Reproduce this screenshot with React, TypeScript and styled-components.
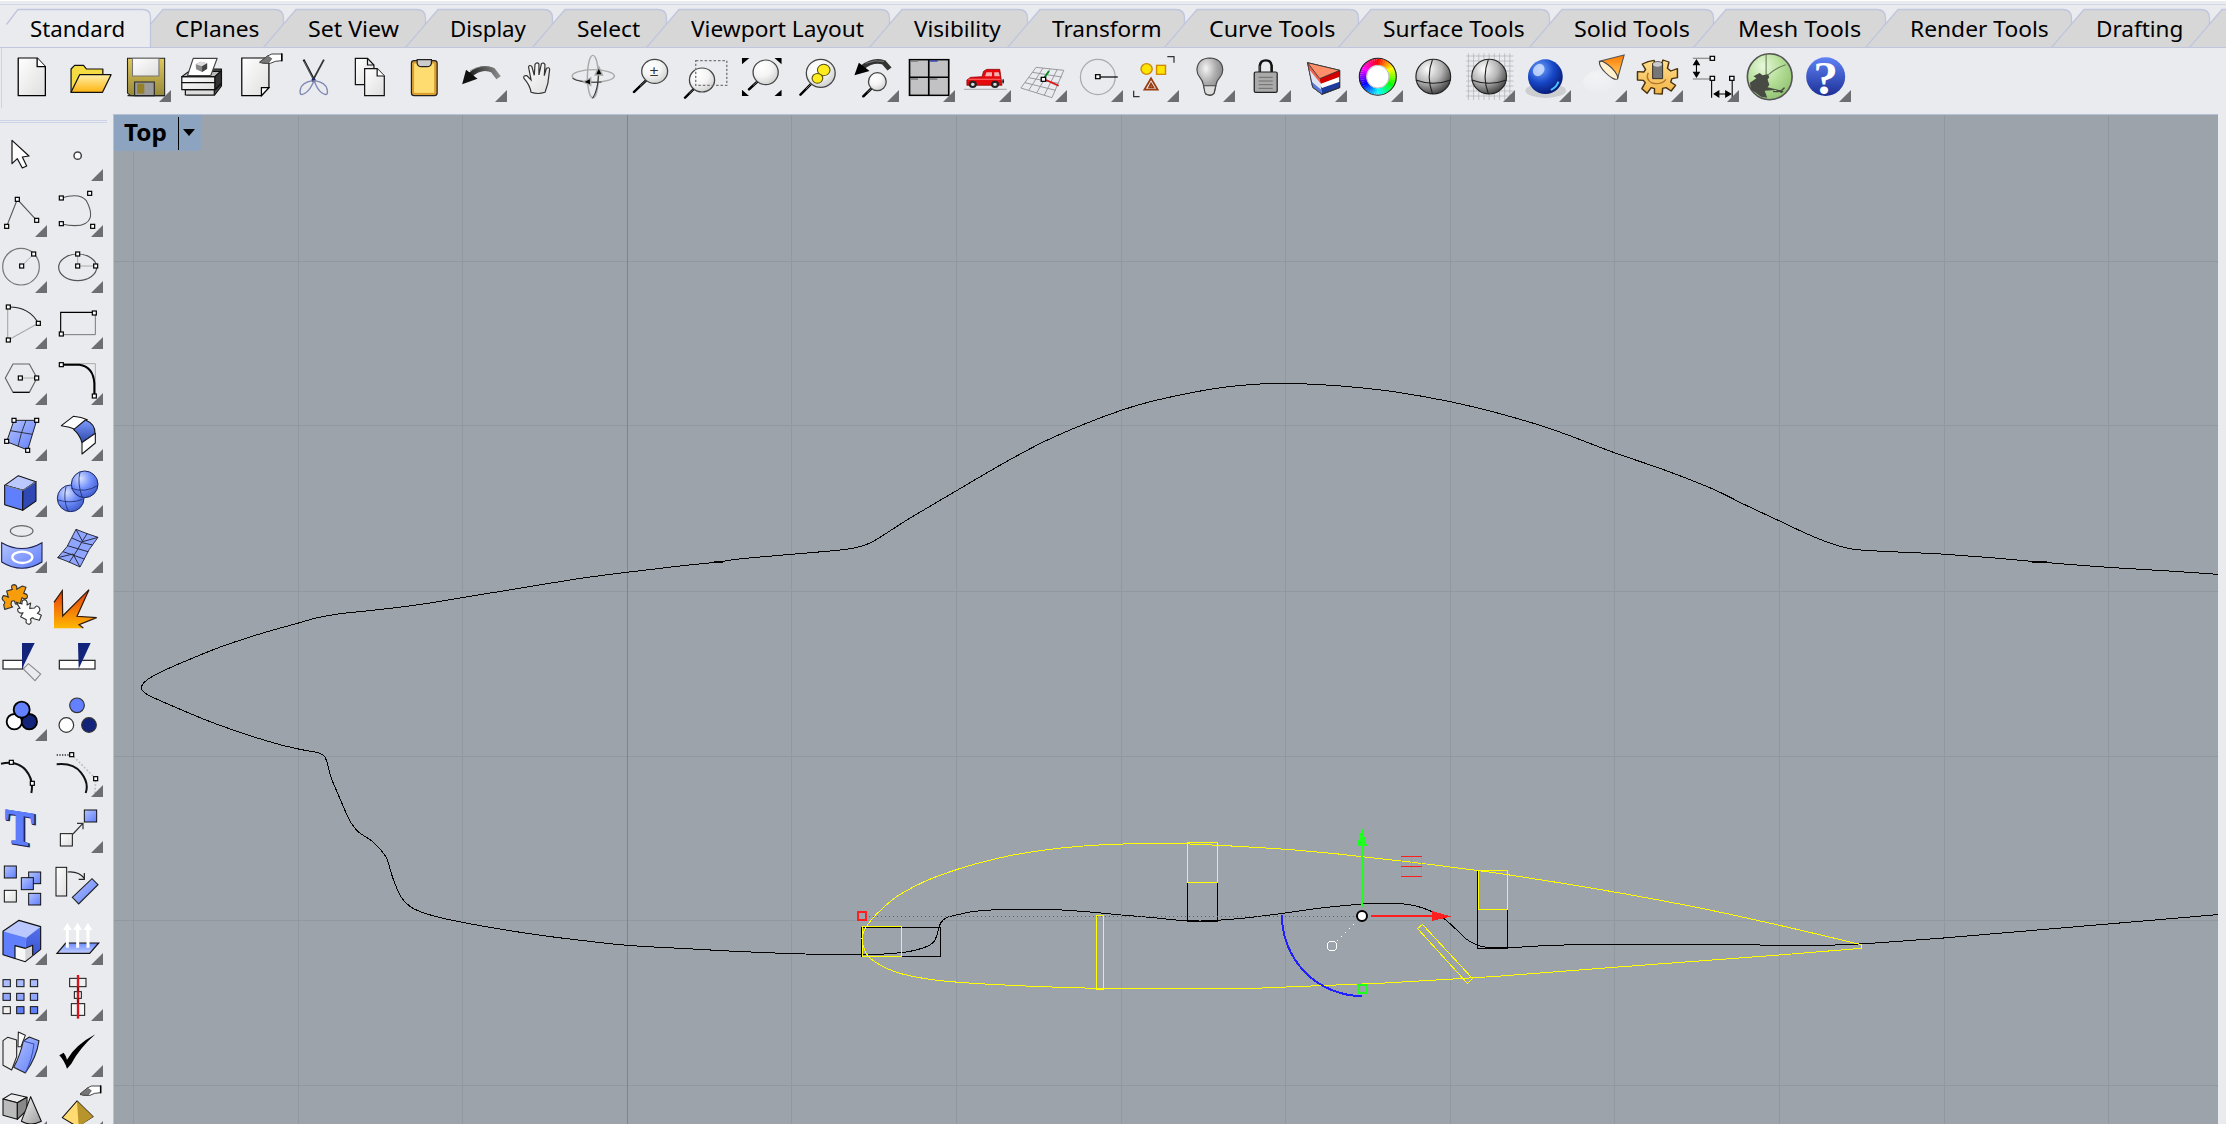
import React from "react";
import styled, { createGlobalStyle } from "styled-components";

const UI_FONT = '"Noto Sans", "Open Sans", sans-serif';

const GlobalStyle = createGlobalStyle`
  html, body { margin: 0; padding: 0; background: #eaebef; overflow: hidden; }
  *, *::before, *::after { box-sizing: border-box; }
`;

const Page = styled.div`
  width: 2226px;
  height: 1124px;
  display: grid;
  grid-template-rows: 8px 40px 66px 1fr;
  background: #eaebef;
  color: #000;
  font-family: ${UI_FONT};
  overflow: hidden;
`;

const TopEdge = styled.div`
  border-top: 1px solid #fff;
  padding-top: 3px;
  &::after { content: ""; display: block; height: 1px; background: #d0d6e6; }
`;

/* ---------- tabs ---------- */

const TabBar = styled.nav`
  display: flex;
  padding-left: 6px;
  border-bottom: 1px solid #bfc6de;
  overflow: hidden;
`;

const TabItem = styled.div<{ $width: number; $active: boolean }>`
  position: relative;
  flex: 0 0 ${(p) => p.$width}px;
  height: 40px;
  padding-left: 24px;
  display: flex;
  align-items: center;
  z-index: ${(p) => (p.$active ? 3 : "auto")};
`;

const TabShape = styled.svg`
  position: absolute;
  top: 0;
  left: -21px;
  height: 40px;
  overflow: visible;
`;

const TabText = styled.span<{ $scale: number }>`
  position: relative;
  z-index: 1;
  white-space: nowrap;
  font-size: 22.5px;
  line-height: 38px;
  padding-top: 2px;
  transform: scaleX(${(p) => p.$scale});
  transform-origin: 0 50%;
`;

const TABS: [string, number, number][] = [
  ["Standard", 145, 0.99],
  ["CPlanes", 133, 1.01],
  ["Set View", 142, 1.03],
  ["Display", 127, 0.99],
  ["Select", 114, 1.01],
  ["Viewport Layout", 223, 1.009],
  ["Visibility", 138, 1.0],
  ["Transform", 157, 1.003],
  ["Curve Tools", 174, 1.035],
  ["Surface Tools", 191, 1.012],
  ["Solid Tools", 164, 1.035],
  ["Mesh Tools", 172, 1.04],
  ["Render Tools", 186, 1.013],
  ["Drafting", 138, 1.0],
  ["", 140, 1],
];

function Tab({ label, width, scale, active }: { label: string; width: number; scale: number; active: boolean }) {
  const r = width + 20.5;
  const d = active
    ? `M21.5 16.5 L33 1.5 H${r - 8} Q${r} 1.5 ${r} 9 V39.5`
    : `M0.5 39.5 L33 1.5 H${r - 9} Q${r} 1.5 ${r} 10 V39.5`;
  const fill = active ? `M21 17 L33 1.5 H${r - 8} Q${r} 1.5 ${r} 9 V40 H21Z` : d + "Z";
  return (
    <TabItem $width={width} $active={active}>
      <TabShape width={width + 22} viewBox={`0 0 ${width + 22} 40`}>
        <path d={fill} fill={active ? "#eaebef" : "#d7d7d7"} />
        <path d={d} fill="none" stroke="#bfc6de" strokeWidth="1.3" />
      </TabShape>
      <TabText $scale={scale}>{label}</TabText>
    </TabItem>
  );
}

/* ---------- tool buttons ---------- */

const Toolbar = styled.div`
  display: flex;
  align-items: flex-start;
  margin-left: 1px;
  padding: 2px 0 0 1px;
  border-left: 1px solid #cdd3e4;
  height: 60px;
`;

const ToolButton = styled.div<{ $h: number; $menu: boolean }>`
  position: relative;
  width: 56px;
  height: ${(p) => p.$h}px;
  flex: none;
  & > svg { display: block; width: 100%; height: 100%; overflow: visible; }
  &::after {
    content: "";
    display: ${(p) => (p.$menu ? "block" : "none")};
    position: absolute;
    right: 0;
    bottom: 0;
    width: 12px;
    height: 12px;
    background: #6d6e71;
    clip-path: polygon(100% 0, 100% 100%, 0 100%);
  }
`;

const Defs = styled.svg`
  position: absolute;
  width: 0;
  height: 0;
`;

const K = "#000";
const line = { fill: "none", stroke: K, strokeWidth: 4, strokeLinejoin: "round" as const };

function Gradients() {
  const lin = (id: string, a: string, b: string, x2 = "0", y2 = "1") => (
    <linearGradient id={id} x1="0" y1="0" x2={x2} y2={y2}>
      <stop offset="0" stopColor={a} />
      <stop offset="1" stopColor={b} />
    </linearGradient>
  );
  const rad = (id: string, a: string, b: string, c: string) => (
    <radialGradient id={id} cx=".35" cy=".28" r=".8">
      <stop offset="0" stopColor={a} />
      <stop offset=".5" stopColor={b} />
      <stop offset="1" stopColor={c} />
    </radialGradient>
  );
  return (
    <Defs>
      <defs>
        {lin("paper", "#fff", "#dedede", "1", "1")}
        {lin("grey", "#f4f4f4", "#9a9a9a", "1", "1")}
        {lin("blue", "#b4c4ff", "#5f7dfa", "1", "1")}
        {lin("blueV", "#6c8cff", "#c2ceff")}
        {lin("blueSide", "#5470ee", "#3c56d0")}
        {lin("sweep", "#7f9bff", "#2c48a8")}
        {lin("help", "#5f82f5", "#1c2f96")}
        {lin("folder", "#fff0a8", "#fdb310")}
        {lin("fire", "#e63a12", "#ffb800", "0", "1")}
        {lin("spot", "#ff7a00", "#ffd36a", "0", "1")}
        {lin("gold", "#e0c85c", "#96893a")}
        {lin("gear", "#ffdf8c", "#f3b548")}
        {lin("fade", "#222", "#888", "1", "0")}
        {rad("ball", "#fff", "#b4b4b4", "#333")}
        {rad("blueball", "#d6e0ff", "#6f8dfb", "#3a56c8")}
        {rad("navyball", "#6fa4ff", "#1747c6", "#04126a")}
        {rad("green", "#e8f8dc", "#b5df98", "#8fc06f")}
        {rad("bulb", "#f4f4f4", "#aaa", "#777")}
        {rad("lens", "#fff", "#f4f4f4", "#ccc")}
        {rad("glow", "#fff", "#f6f6f8", "#eaebef")}
      </defs>
    </Defs>
  );
}

const Tri = ({ p, fill }: { p: string; fill: string }) => <polygon points={p} fill={fill} />;

function Grip({ x, y }: { x: number; y: number }) {
  return <rect x={x - 6} y={y - 6} width="12" height="12" fill="#fff" stroke="#000" strokeWidth="3.6" />;
}

function Box({ x, y, w, h, fill = "url(#blue)" }: { x: number; y: number; w: number; h: number; fill?: string }) {
  return <rect x={x} y={y} width={w} height={h} fill={fill} stroke="#111" strokeWidth="3" />;
}

function Lens({ x, y, rx, ry, tx, ty }: { x: number; y: number; rx: number; ry: number; tx: number; ty: number }) {
  const dx = x - rx * 0.66;
  const dy = y + ry * 0.75;
  return (
    <>
      <path d={`M${tx} ${ty}L${dx} ${dy}`} stroke="#000" strokeWidth="7" strokeLinecap="round" />
      <path d={`M${(tx + dx) / 2} ${(ty + dy) / 2}L${dx} ${dy}`} stroke="#999" strokeWidth="2" />
      <ellipse cx={x} cy={y} rx={rx} ry={ry} fill="url(#lens)" stroke="#444" strokeWidth="3.5" />
    </>
  );
}

function Pointing({ x, y }: { x: number; y: number }) {
  return (
    <g transform={`translate(${x} ${y})`}>
      <path d="M0 26 L22 8 L34 2 H62 V22 L44 24 L30 30 L10 30Z" fill="#fff" stroke="#222" strokeWidth="2.5" />
      <path d="M0 28 L22 8 L34 16 L24 30Z" fill="#777" stroke="#444" strokeWidth="2" />
      <path d="M62 0V24" stroke="#000" strokeWidth="4.5" />
    </g>
  );
}

function Globe({ x, y, rx, ry }: { x: number; y: number; rx: number; ry: number }) {
  return (
    <g stroke="#222" strokeWidth="3" fill="none">
      <ellipse cx={x} cy={y} rx={rx} ry={ry} fill="url(#ball)" />
      <path d={`M${x - 2} ${y - ry}Q${x - 20} ${y} ${x - 2} ${y + ry}M${x - rx} ${y + 10}Q${x} ${y + 30} ${x + rx} ${y + 10}`} />
    </g>
  );
}

const Wheel = () => (
  <g fill="none" strokeWidth="19">
    {Array.from({ length: 48 }, (_, i) => {
      const a = ((i * 7.5 - 94) * Math.PI) / 180;
      const b = ((i * 7.5 - 85.6) * Math.PI) / 180;
      return (
        <path
          key={i}
          d={`M${751 + 41 * Math.cos(a)} ${230 + 45 * Math.sin(a)}L${751 + 41 * Math.cos(b)} ${230 + 45 * Math.sin(b)}`}
          stroke={`hsl(${i * 7.5} 100% 50%)`}
        />
      );
    })}
    <ellipse cx="751" cy="230" rx="50" ry="55.5" stroke="#222" strokeWidth="3" />
    <ellipse cx="751" cy="230" rx="30" ry="34" stroke="#888" strokeWidth="1.5" fill="#fff" />
  </g>
);

/* Each strip of the tool sheet has its own left edge and horizontal scale. */
type Strip = { left: number; sx: number };
const S1: Strip = { left: 0, sx: 2.8 };
const S2: Strip = { left: 540, sx: 2.7034 };
const S3: Strip = { left: 1100, sx: 2.7034 };
const S4: Strip = { left: 1660, sx: 2.7703 };

type TopTool = { name: string; strip: Strip; menu?: boolean; art: React.ReactNode };

const TOP_TOOLS: TopTool[] = [
  { name: "New", strip: S1, art: <g {...line} strokeWidth="3.6"><path d="M51 174H104L127 200V287H51Z" fill="url(#paper)" /><path d="M104 174V200H127" fill="#fff" /></g> },
  {
    name: "Open", strip: S1,
    art: <g stroke="#111" strokeWidth="3.4" strokeLinejoin="round"><path d="M199 277V207L209 196H234L242 207H288V225L276 277Z" fill="#f6dc43" /><path d="M199 277L223 224H311L287 277Z" fill="url(#folder)" /></g>,
  },
  {
    name: "Save", strip: S1, menu: true,
    art: <g stroke="#222" strokeWidth="3"><path d="M357 175H461V287H366L357 279Z" fill="url(#gold)" /><rect x="371" y="175" width="74" height="53" fill="url(#paper)" stroke="#777" /><path d="M377 287V246H432V287Z" fill="#9b9b9b" /><rect x="384" y="251" width="20" height="30" fill="#948027" stroke="none" /><path d="M357 287H461" strokeWidth="4" /></g>,
  },
  {
    name: "Print", strip: S1,
    art: <g stroke="#111" strokeWidth="3.4" strokeLinejoin="round"><path d="M524 227L544 207H620V258L601 285H524Z" fill="#555" /><path d="M509 230H602V269H509Z" fill="url(#paper)" /><path d="M509 230L529 214H618L602 230Z" fill="#bbb" /><path d="M602 230L620 212V250L602 269Z" fill="#333" /><path d="M519 269H600V285H519Z" fill="#ddd" /><path d="M509 248H602M517 269H604L620 250" fill="none" /><path d="M525 227L541 175H608L590 227Z" fill="#fff" stroke="#444" /><path d="M548 193L562 185L580 190V206L566 216L549 208Z" fill="#888" stroke="none" /><path d="M548 193L562 185L580 190L566 199Z" fill="#ddd" stroke="none" /><path d="M566 199L580 190V206L566 216Z" fill="#444" stroke="none" /></g>,
  },
  {
    name: "Properties", strip: S1,
    art: <><path d="M677 174H753V263L732 287H677Z" fill="url(#paper)" {...{ stroke: K, strokeWidth: 3.4 }} /><path d="M753 263H732V287Z" fill="#fff" stroke={K} strokeWidth="3.4" /><Pointing x={727} y={160} /></>,
  },
  {
    name: "Cut", strip: S1,
    art: <g fill="none"><path d="M850 179L882 245" stroke="#111" strokeWidth="6" /><path d="M907 179L874 245" stroke="#333" strokeWidth="5" /><path d="M852 184L876 236" stroke="#bbb" strokeWidth="1.5" /><circle cx="878" cy="238" r="5" fill="#1b2a6b" /><path d="M875 242Q845 248 841 268T850 282T872 258T878 242M881 242Q912 248 916 268T907 282T886 258T880 242" stroke="#8088b4" strokeWidth="4" /></g>,
  },
  {
    name: "Copy", strip: S1,
    art: <g stroke="#111" strokeWidth="3.4"><path d="M995 175H1029L1047 195V254H995Z" fill="url(#paper)" /><path d="M1029 175V195H1047" fill="none" /><path d="M1021 206H1056L1076 228V287H1021Z" fill="url(#paper)" /><path d="M1056 206V228H1076" fill="#fff" /></g>,
  },
  {
    name: "Paste", strip: S1,
    art: <g stroke="#222" strokeWidth="3.4"><rect x="1152" y="182" width="72" height="105" rx="8" fill="#e0a030" /><rect x="1158" y="189" width="59" height="91" rx="3" fill="#ffdc70" stroke="#c79328" strokeWidth="2" /><path d="M1168 179H1208V190Q1206 200 1196 200H1180Q1170 200 1168 190Z" fill="#ccc" /></g>,
  },
  {
    name: "Undo", strip: S1, menu: true,
    art: <g><path d="M1315 226Q1348 195 1380 211L1396 233" fill="none" stroke="url(#fade)" strokeWidth="15" /><path d="M1316 212Q1350 192 1382 205" fill="none" stroke="#777" strokeWidth="2" /><Tri p="1294,253 1305,209 1337,236" fill="#111" /></g>,
  },
  {
    name: "Pan", strip: S1,
    art: <path d="M1487 277Q1484 255 1467 235Q1464 226 1475 227L1487 240L1480 201Q1482 193 1489 199L1496 226L1498 193Q1504 185 1509 192V225L1516 191Q1523 186 1526 194L1524 227L1530 205Q1538 200 1539 208L1534 250L1526 277Q1506 284 1487 277Z" fill="url(#paper)" stroke="#333" strokeWidth="3.4" />,
  },
  {
    name: "Rotate view", strip: S2,
    art: <g fill="none" stroke="#aaa" strokeWidth="4"><ellipse cx="143" cy="230" rx="15" ry="64" /><ellipse cx="144" cy="228" rx="57" ry="19" /><path d="M88 235Q108 249 166 246M158 224Q157 270 142 295" stroke="#333" strokeWidth="3" /><Tri p="117,246 137,234 137,256" fill="#000" /><Tri p="159,201 149,225 169,225" fill="#000" /></g>,
  },
  { name: "Zoom", strip: S2, art: <><Lens x={310} y={214} rx={35} ry={36} tx={254} ty={276} /><text x="297" y="227" fontFamily="Liberation Sans" fontSize="42" fill="#333">±</text></> },
  {
    name: "Zoom window", strip: S2,
    art: <><Lens x={438} y={240} rx={34} ry={36} tx={392} ty={293} /><rect x="421" y="182" width="84" height="74" fill="none" stroke="#777" strokeWidth="3.6" strokeDasharray="7 5" /></>,
  },
  {
    name: "Zoom extents", strip: S2,
    art: <><Lens x={610} y={217} rx={34} ry={37} tx={565} ty={268} /><path d="M546 174H566L546 193ZM653 174V193L634 174ZM546 288V269L565 288ZM653 288H634L653 269Z" fill="#000" /></>,
  },
  {
    name: "Zoom selected", strip: S2,
    art: <><Lens x={759} y={220} rx={39} ry={42} tx={704} ty={284} /><g fill="#ffeb1e" stroke="#54500e" strokeWidth="3"><circle cx="767" cy="210" r="17" /><circle cx="750" cy="235" r="14.5" /></g></>,
  },
  {
    name: "Undo view", strip: S2, menu: true,
    art: <><Lens x={912} y={245} rx={24} ry={27} tx={874} ty={289} /><path d="M872 202Q900 177 929 187L945 207" fill="none" stroke="#333" strokeWidth="14" /><path d="M880 190Q906 178 930 184" fill="none" stroke="#999" strokeWidth="2" /><Tri p="850,226 862,188 891,213" fill="#000" /></>,
  },
  {
    name: "Four viewports", strip: S2, menu: true,
    art: <g><rect x="999" y="179" width="106" height="107" fill="#c2c2c4" stroke="#000" strokeWidth="4.5" /><path d="M1051 179V286M999 232H1105" stroke="#000" strokeWidth="4.5" /><path d="M1002 183H1022M1002 237H1022M1054 237H1074" stroke="#777" strokeWidth="4" /><path d="M1054 183H1075" stroke="#2338b0" strokeWidth="4" /></g>,
  },
  {
    name: "Shade car", strip: S2, menu: true,
    art: <g><path d="M1146 268H1262" stroke="#b4b4b6" strokeWidth="4" /><path d="M1154 256V240L1164 232L1195 230L1199 214L1208 208H1243L1249 256Z" fill="#e5080c" stroke="#8b0000" strokeWidth="2" /><path d="M1203 229L1207 217H1222V229ZM1228 217H1240L1243 229H1228Z" fill="#f5b0b0" /><path d="M1158 238H1245" stroke="#ff7272" strokeWidth="3" /><g fill="#ddd" stroke="#222" strokeWidth="6"><circle cx="1170" cy="253" r="8" /><circle cx="1230" cy="253" r="8" /></g><ellipse cx="1252" cy="244" rx="2.5" ry="7" fill="#222" /></g>,
  },
  {
    name: "CPlane", strip: S2, menu: true,
    art: <g fill="none" stroke="#909096" strokeWidth="2.6"><path d="M1341 202L1416 211L1384 293L1300 264ZM1331 217L1410 231M1321 233L1402 250M1311 248L1394 271M1360 204L1321 271M1379 207L1343 278M1398 209L1363 286" /><path d="M1361 237L1376 213" stroke="#0a8a1e" strokeWidth="5" /><path d="M1368 240L1402 257" stroke="#d11" strokeWidth="5" /><Grip x={1361} y={238} /></g>,
  },
  {
    name: "Circle", strip: S2, menu: true,
    art: <g fill="none"><ellipse cx="1508" cy="231" rx="47" ry="53" stroke="#aaa" strokeWidth="3.4" /><path d="M1508 231H1562" stroke="#000" strokeWidth="3.6" /><Grip x={1508} y={230} /></g>,
  },
  {
    name: "Select", strip: S3, menu: true,
    art: <g fill="#ffe400" stroke="#cf8a0a" strokeWidth="4"><ellipse cx="126" cy="207" rx="15" ry="16" /><rect x="153" y="196" width="24" height="27" /><path d="M138 235L156 269H120ZM138 251L133 262H144Z" fill="none" stroke="#9a3e12" strokeWidth="5" /><path d="M182 170H200V188M91 272V290H107" fill="none" stroke="#333" strokeWidth="3.4" /></g>,
  },
  {
    name: "Lamp", strip: S3, menu: true,
    art: <g stroke="#444" strokeWidth="3"><path d="M279 253Q278 243 270 232Q262 221 262 209Q264 175 297 174Q330 176 332 209Q332 221 324 232Q315 243 314 253L309 279Q302 291 286 283Z" fill="url(#bulb)" /><path d="M280 257H313L308 280Q297 291 284 279Z" fill="#ddd" /></g>,
  },
  {
    name: "Lock", strip: S3, menu: true,
    art: <g><path d="M432 217V197Q434 181 448 181Q463 181 464 197V217" fill="none" stroke="#111" strokeWidth="7" /><path d="M432 215V197" stroke="#aaa" strokeWidth="1.5" /><rect x="417" y="216" width="62" height="61" rx="4" fill="#aaa" stroke="#222" strokeWidth="3.4" /><path d="M429 232H467M429 243H467M429 254H467M429 265H467" stroke="#666" strokeWidth="2.5" /></g>,
  },
  {
    name: "Layers", strip: S3, menu: true,
    art: <g strokeWidth="2.4" stroke="#333"><path d="M561 188L648 211V263L600 283L575 262Z" fill="#1e3c9c" stroke="#111" /><path d="M564 205L600 264L648 245V225L594 236Z" fill="#fff" stroke="none" /><path d="M562 194L597 251L648 230V211L594 236Z" fill="#d30000" stroke="none" /><path d="M561 188L594 236L600 283L575 262Z" fill="#dfe4f4" stroke="none" /><path d="M561 188L594 236L596 250L565 208Z" fill="#f2604c" stroke="none" /><path d="M569 242L599 270L600 283L575 262Z" fill="#5878d8" stroke="none" /><path d="M561 188L648 211L594 236Z" fill="#ff8f69" /><path d="M561 188L575 262L600 283L648 263V211" fill="none" /></g>,
  },
  { name: "Colours", strip: S3, menu: true, art: <Wheel /> },
  { name: "Shaded", strip: S3, art: <Globe x={901} y={230} rx={47} ry={52} /> },
  {
    name: "Shaded grid", strip: S3, menu: true,
    art: <><path d="M996 160V300M1010 160V300M1024 160V300M1038 160V300M1052 160V300M1066 160V300M1080 160V300M1094 160V300M1108 160V300M990 168H1118M990 183H1118M990 198H1118M990 213H1118M990 228H1118M990 243H1118M990 258H1118M990 273H1118M990 288H1118" stroke="#aeb0b4" strokeWidth="2" /><Globe x={1052} y={230} rx={47} ry={52} /></>,
  },
  {
    name: "Rendered", strip: S3, menu: true,
    art: <><ellipse cx="1205" cy="272" rx="55" ry="22" fill="#999" opacity=".35" /><ellipse cx="1204" cy="230" rx="47" ry="52" fill="url(#navyball)" /><ellipse cx="1186" cy="210" rx="15" ry="19" fill="#dbe8ff" opacity=".75" transform="rotate(25 1186 210)" /><path d="M1219 270Q1236 260 1239 245" stroke="#4cc3ff" strokeWidth="6" fill="none" /></>,
  },
  {
    name: "Spotlight", strip: S3, menu: true,
    art: <><ellipse cx="1352" cy="245" rx="46" ry="34" fill="url(#glow)" opacity=".4" /><path d="M1350 184L1417 165L1399 236Z" fill="url(#spot)" stroke="#555" strokeWidth="3" /><ellipse cx="1375" cy="211" rx="11" ry="35" fill="#fff0cf" stroke="#444" strokeWidth="3" transform="rotate(-42 1375 211)" /></>,
  },
  {
    name: "Options", strip: S3, menu: true,
    art: <g><path d="M1482 185L1498 181L1502 198H1516L1522 180L1538 186L1534 205L1543 213L1561 206V233L1546 236L1543 246L1556 256L1544 273L1530 263L1521 265L1520 282L1499 281V266L1490 263L1479 280L1465 266L1474 248L1469 241L1453 240V215L1470 216L1475 209L1466 192Z" fill="url(#gear)" stroke="#4a3210" strokeWidth="4" strokeLinejoin="round" /><path d="M1482 218Q1474 238 1492 249Q1518 256 1530 238" fill="none" stroke="#b8782c" strokeWidth="4" /><path d="M1494 190Q1508 180 1521 190V236H1494Z" fill="#777" stroke="#222" strokeWidth="2.5" /><ellipse cx="1507" cy="193" rx="12" ry="7" fill="#ccc" /></g>,
  },
  {
    name: "Dimension", strip: S4, menu: true,
    art: <g stroke="#000" strokeWidth="3" fill="none"><path d="M91 175H140M91 237H140" stroke="#777" /><path d="M101 188V222M143 241V293M200 241V293M156 282H190" /><Tri p="101,180 93,194 109,194" fill="#000" /><Tri p="101,231 93,217 109,217" fill="#000" /><Tri p="150,282 163,273 163,291" fill="#000" /><Tri p="196,282 182,273 182,291" fill="#000" /><Grip x={145} y={175} /><Grip x={145} y={235} /><Grip x={199} y={235} /></g>,
  },
  {
    name: "Grasshopper", strip: S4,
    art: <g><ellipse cx="304" cy="230" rx="62" ry="69" fill="url(#green)" stroke="#555" strokeWidth="4.5" /><path d="M294 163V225M298 226Q322 203 348 194" stroke="#667a58" strokeWidth="3" fill="none" /><path d="M249 248L267 235L259 229L276 219L284 226L298 223L303 231L298 239L303 254L298 262L343 273L337 280L320 270L290 272L297 293L280 290L252 268Z" fill="#484a44" /><path d="M345 263Q335 278 313 274" stroke="#484a44" strokeWidth="4" fill="none" /></g>,
  },
  {
    name: "Help", strip: S4, menu: true,
    art: <g><ellipse cx="459" cy="230" rx="54" ry="58" fill="url(#help)" /><text x="459" y="281" textAnchor="middle" fontFamily="Liberation Serif" fontWeight="700" fontSize="137" fill="#fff">?</text></g>,
  },
];

/* ---------- side tools, drawn on a sheet three times the button size ---------- */

type SideTool = { name: string; menu?: boolean; art: React.ReactNode };
const SIDE_ROWS: { y: number; tools: SideTool[] }[] = [
  { y: 45, tools: [
    { name: "Pointer", art: <path d="M36 91V161L52 146L67 174L80 168L67 141L87 138Z" fill="#fff" stroke="#111" strokeWidth="3.6" strokeLinejoin="round" /> },
    { name: "Point", menu: true, art: <circle cx="233" cy="137" r="11" fill="#fff" stroke="#444" strokeWidth="4.5" /> },
  ] },
  { y: 213, tools: [
    { name: "Polyline", menu: true, art: <><path d="M20 349L52 268L110 331" fill="none" stroke="#555" strokeWidth="3.4" /><Grip x={20} y={349} /><Grip x={52} y={268} /><Grip x={110} y={331} /></> },
    { name: "Curve", menu: true, art: <><path d="M184 264Q240 247 259 272Q275 300 271 322Q260 358 184 342" fill="none" stroke="#555" strokeWidth="3.2" /><Grip x={184} y={264} /><Grip x={269} y={250} /><Grip x={184} y={341} /><Grip x={278} y={349} /></> },
  ] },
  { y: 381, tools: [
    { name: "Circle", menu: true, art: <><circle cx="63" cy="470" r="55" fill="none" stroke="#777" strokeWidth="3.6" /><path d="M65 468L101 432" stroke="#aaa" strokeWidth="3" /><Grip x={65} y={468} /><Grip x={101} y={432} /></> },
    { name: "Ellipse", menu: true, art: <><ellipse cx="233" cy="472" rx="57" ry="40" fill="none" stroke="#555" strokeWidth="3.6" /><path d="M233 432V468H287" fill="none" stroke="#aaa" strokeWidth="3" /><Grip x={233} y={432} /><Grip x={233} y={468} /><Grip x={287} y={468} /></> },
  ] },
  { y: 549, tools: [
    { name: "Arc", menu: true, art: <><path d="M115 640L25 690M23 690V591" stroke="#aaa" strokeWidth="3.4" fill="none" /><path d="M25 591Q88 590 115 640" stroke="#222" strokeWidth="3.4" fill="none" /><Grip x={25} y={591} /><Grip x={115} y={640} /><Grip x={25} y={690} /></> },
    { name: "Rectangle", menu: true, art: <><path d="M286 607V674H182" fill="none" stroke="#777" strokeWidth="3" /><path d="M182 674V607H286" fill="none" stroke="#000" strokeWidth="3.4" /><Grip x={283} y={609} /><Grip x={184} y={672} /></> },
  ] },
  { y: 717, tools: [
    { name: "Polygon", menu: true, art: <><path d="M39 762H88L111 804L88 847H39L16 804Z" fill="none" stroke="#666" strokeWidth="3.4" /><path d="M39 847H88" stroke="#000" strokeWidth="3.4" /><path d="M61 804H110" stroke="#aaa" strokeWidth="3" /><Grip x={61} y={804} /><Grip x={110} y={804} /></> },
    { name: "Fillet", menu: true, art: <><path d="M184 761H286V858" fill="none" stroke="#aaa" strokeWidth="3" /><path d="M184 764H238Q280 770 283 820V858" fill="none" stroke="#000" strokeWidth="6" /><Grip x={184} y={764} /><Grip x={283} y={858} /></> },
  ] },
  { y: 885, tools: [
    { name: "Surface", menu: true, art: <g stroke="#222" strokeWidth="3"><path d="M42 931H110L83 1020L20 995Z" fill="url(#blue)" /><path d="M78 931Q62 970 54 1009M31 962L97 973" fill="none" strokeWidth="2.6" /><Grip x={42} y={931} /><Grip x={110} y={931} /><Grip x={20} y={994} /><Grip x={83} y={1021} /></g> },
    { name: "Sweep", menu: true, art: <g stroke="#111" strokeWidth="3.2" strokeLinejoin="round"><path d="M184 947L220 919Q245 922 262 929L228 960Q210 950 184 947Z" fill="#fff" /><path d="M256 930Q286 942 285 970L246 998Q238 972 221 959Z" fill="url(#sweep)" /><path d="M246 998L286 970V999L246 1032Z" fill="#fff" /></g> },
  ] },
  { y: 33, tools: [
    { name: "Box", menu: true, art: <g stroke="#111" strokeWidth="3.2" strokeLinejoin="round"><path d="M14 106L55 77L108 95L69 121Z" fill="#bac8ff" /><path d="M14 106L69 121L68 181L14 164Z" fill="#5f7ffc" /><path d="M69 121L108 95V153L68 181Z" fill="#3048b4" /><path d="M15 107L69 121L107 96" fill="none" stroke="#dfe6ff" strokeWidth="1.6" /></g> },
    { name: "Boolean", menu: true, art: <g fill="url(#blueball)" stroke="#1c2860" strokeWidth="3"><circle cx="212" cy="145" r="40" /><path d="M198 110Q188 150 205 184M174 150Q212 162 247 148" fill="none" strokeWidth="2.4" /><circle cx="254" cy="103" r="40" /><path d="M240 66Q231 100 247 142M214 115Q254 130 293 107" fill="none" strokeWidth="2.4" /></g> },
  ] },
  { y: 201, tools: [
    { name: "Project", menu: true, art: <g><ellipse cx="65" cy="243" rx="34" ry="16" fill="none" stroke="#666" strokeWidth="3.4" /><path d="M5 278Q66 313 126 278V336Q66 374 5 336Z" fill="url(#blue)" stroke="#1a2150" strokeWidth="3.2" /><ellipse cx="67" cy="322" rx="30" ry="17" fill="none" stroke="#fff" strokeWidth="7" /></g> },
    { name: "Mesh", menu: true, art: <g fill="none" stroke="#223" strokeWidth="2.8"><path d="M228 238Q262 252 294 262L268 298L240 351Q205 334 173 323L201 290Z" fill="#8ea6ff" /><path d="M216 264Q248 282 278 285M189 305L253 327M262 250Q245 275 232 300L207 338M202 287L264 305M228 238L248 275L294 262M173 323L219 312L240 351" /></g> },
  ] },
  { y: 369, tools: [
    { name: "Plug-ins", art: <g stroke="#333" strokeWidth="3.4" strokeLinejoin="round"><path d="M20 423L37 418Q30 405 43 404Q53 407 50 418L67 408L78 412L71 430Q86 432 81 444Q74 450 66 443L60 464L46 462Q45 448 35 454Q30 466 38 471L14 478L11 464Q18 458 10 452Q3 446 10 437Q20 438 25 442Z" fill="#f79d0c" /><path d="M49 457L66 462Q64 450 75 449Q84 454 81 465L92 459L89 475L104 474Q109 463 117 472Q124 481 112 490L124 496L118 511L102 506Q98 500 91 508Q97 519 88 523Q75 522 79 509L62 500L69 488Q60 492 54 484Q50 474 60 475Z" fill="#fff" /></g> },
    { name: "Explode", art: <><path d="M162 457L187 422L188 498L267 419L231 499L290 503L237 524L250 535H162Z" fill="url(#fire)" /><path d="M162 457L187 422L188 498L267 419L231 499L290 503L237 524L250 534" fill="none" stroke="#321a08" strokeWidth="3.6" /></> },
  ] },
  { y: 537, tools: [
    { name: "Trim", art: <g><rect x="9" y="631" width="59" height="26" fill="#fff" stroke="#222" strokeWidth="3.6" /><path d="M85 641L122 672L105 692L70 657Z" fill="none" stroke="#888" strokeWidth="3.2" /><Tri p="66,579 104,579 66,656" fill="#12247a" /></g> },
    { name: "Split", art: <g><rect x="178" y="631" width="107" height="26" fill="#fff" stroke="#222" strokeWidth="3.6" /><Tri p="234,579 272,579 236,656" fill="#12247a" /></g> },
  ] },
  { y: 705, tools: [
    { name: "Group", menu: true, art: <g stroke="#000" strokeWidth="5.5"><circle cx="43" cy="815" r="23" fill="#fff" /><circle cx="88" cy="815" r="23" fill="#12247a" /><circle cx="65" cy="779" r="24" fill="#6280ff" /></g> },
    { name: "Ungroup", art: <g stroke="#333" strokeWidth="3.6"><circle cx="231" cy="766" r="22" fill="#6280ff" /><circle cx="199" cy="825" r="22" fill="#fff" /><circle cx="267" cy="825" r="22" fill="#12247a" /></g> },
  ] },
  { y: 873, tools: [
    { name: "Edit points", art: <><path d="M3 941Q50 930 77 960Q102 990 94 1029" fill="none" stroke="#111" strokeWidth="6" /><Grip x={34} y={937} /><Grip x={97} y={1000} /></> },
    { name: "Control points", menu: true, art: <><path d="M170 943Q220 938 243 968Q268 1000 257 1029" fill="none" stroke="#111" strokeWidth="6" /><path d="M170 915H207" stroke="#333" strokeWidth="4" strokeDasharray="4 4" /><path d="M221 920L287 986L285 1029" fill="none" stroke="#bbb" strokeWidth="5" strokeDasharray="5 6" /><Grip x={215} y={914} /><Grip x={287} y={986} /></> },
  ] },
  { y: 51, tools: [
    { name: "Text", art: <g transform="translate(58 192) skewY(9) scale(.9 1)" fontFamily="Liberation Serif" fontWeight="700" fontSize="146"><text x="-44" y="2" stroke="#1c2554" strokeWidth="7" fill="#1c2554">T</text><text x="-48" y="0" stroke="#5d7dfb" strokeWidth="4" fill="#5d7dfb">T</text></g> },
    { name: "Move", menu: true, art: <><Box x={181} y={161} w={36} h={37} fill="url(#paper)" /><Box x={253} y={90} w={37} h={36} /><path d="M219 162L248 131M231 130H249V148" fill="none" stroke="#333" strokeWidth="3.6" /></> },
  ] },
  { y: 219, tools: [
    { name: "Copy", art: <><Box x={13} y={258} w={36} h={36} /><Box x={86} y={276} w={36} h={35} /><Box x={64} y={293} w={36} h={36} /><Box x={13} y={331} w={36} h={35} fill="url(#paper)" /><Box x={86} y={340} w={36} h={35} /></> },
    { name: "Rotate", art: <><Box x={168} y={262} w={32} h={86} fill="url(#paper)" /><path d="M217 352L276 296L294 314L236 372Z" fill="url(#blue)" stroke="#222" strokeWidth="3.4" /><path d="M203 276Q236 273 253 295M253 279V298H236" fill="none" stroke="#222" strokeWidth="3.6" /></> },
  ] },
  { y: 387, tools: [
    { name: "Solid edit", menu: true, art: <g stroke="none"><path d="M9 454L57 421L122 440L79 473Z" fill="#bac8ff" /><path d="M9 454L79 473L76 505L45 497V537L9 524Z" fill="#5f7ffc" /><path d="M79 473L122 440V508L99 526V496L76 505Z" fill="url(#blueSide)" /><path d="M45 497L76 505L98 496V526L76 545L45 537Z" fill="#f7f7f7" /><path d="M76 505L98 496V526L76 545Z" fill="#d4d4d6" /><g fill="none" stroke="#111" strokeWidth="3.4" strokeLinejoin="round"><path d="M9 454L57 421L122 440V508L76 545L9 524Z" /><path d="M45 537V497L76 505L98 496V526" /></g></g> },
    { name: "Extrude", menu: true, art: <g><path d="M197 489H296L269 520H171Z" fill="url(#blueV)" stroke="#111" strokeWidth="3.6" /><path d="M202 503V446M233 503V446M264 503V446" stroke="#fff" strokeWidth="9" /><path d="M189 450L202 428L215 450ZM220 450L233 428L246 450ZM251 450L264 428L277 450Z" fill="#fff" /></g> },
  ] },
  { y: 555, tools: [
    { name: "Array", menu: true, art: <>{[599, 640, 680].map((y, r) => [9, 50, 91].map((x, c) => <Box key={x + y} x={x} y={y} w={22} h={21} fill={r === 2 && c === 0 ? "#f1f0ec" : ["#aabcff", "#90a8ff", "#5f7ffa"][r]} />))}</> },
    { name: "Align", menu: true, art: <><Box x={209} y={595} w={49} h={25} fill="#f0f0f0" /><Box x={223} y={635} w={21} h={20} fill="#f0f0f0" /><Box x={214} y={671} w={40} h={35} fill="#f4f4f4" /><path d="M234 585V716" stroke="#d9141c" strokeWidth="7" /><path d="M234 620V635M234 656V670" stroke="#650000" strokeWidth="3" /></> },
  ] },
  { y: 723, tools: [
    { name: "Blocks", menu: true, art: <g stroke="#222" strokeWidth="3.2" strokeLinejoin="round"><path d="M9 782L23 772L50 780V830L35 870L9 856Z" fill="#ededee" /><path d="M54 800L55 756L76 766L63 800Z" fill="#fff" /><path d="M41 862Q60 828 70 783L88 771L117 782Q110 832 76 879Z" fill="url(#blue)" /><path d="M70 783L102 792Q96 840 76 879" fill="none" stroke="#3550b8" /></g> },
    { name: "Check", menu: true, art: <path d="M178 826L191 818Q198 827 201 839Q226 795 286 763Q241 802 214 851L201 866Q193 842 178 826Z" fill="#000" /> },
  ] },
  { y: 891, tools: [
    { name: "Solids", menu: true, art: <g stroke="#111" strokeWidth="3.2" strokeLinejoin="round"><path d="M9 957L35 941L81 952L52 968Z" fill="#eee" /><path d="M9 957L52 968V1018L9 1006Z" fill="#bbb" /><path d="M52 968L81 952V990L52 1018Z" fill="#888" /><path d="M92 950L124 1024Q92 1040 64 1024Z" fill="url(#grey)" /></g> },
    { name: "Render tools", menu: true, art: <><path d="M231 963L279 1010L232 1040L187 1013Z" fill="#ffdb71" stroke="#111" strokeWidth="3.2" /><path d="M231 963L279 1010L236 1040Z" fill="#b8942c" /><Pointing x={240} y={916} /></> },
  ] },
];

/* ---------- viewport ---------- */

const Body = styled.div`
  display: grid;
  grid-template-columns: 113px 2105px 8px;
  min-height: 0;
`;

const Sidebar = styled.aside`
  height: 1010px;
  padding-top: 6px;
  overflow: hidden;
`;

const SideGrip = styled.div`
  width: 107px;
  height: 3px;
  margin-bottom: 2px;
  border-top: 1px solid #cdd3e8;
  border-bottom: 1px solid #cdd3e8;
`;

const SideGrid = styled.div`
  display: grid;
  grid-template-columns: 56px 56px;
  margin-left: -9px;
`;

const Viewport = styled.main`
  position: relative;
  height: 1010px;
  border-left: 1px solid #b6c1d6;
  border-top: 1px solid #b3c0d6;
  background: #9ca3ab;
  overflow: hidden;
  & > svg { display: block; }
`;

const ViewLabel = styled.div`
  position: absolute;
  top: 0;
  left: 0;
  width: 87px;
  height: 36px;
  display: flex;
  align-items: center;
  padding-left: 10px;
  background: #8ca4c0;
  border-bottom-right-radius: 4px;
  font-size: 23px;
  font-weight: 700;
`;

const ViewName = styled.span`
  width: 54px;
  line-height: 34px;
  padding-bottom: 2px;
  transform: scaleX(1.06);
  transform-origin: 0 50%;
`;

const ViewMenu = styled.span`
  height: 33px;
  border-left: 1px solid #000;
  padding: 12px 0 0 4px;
  &::after {
    content: "";
    display: block;
    border: 6.5px solid transparent;
    border-top: 7px solid #000;
    border-bottom: 0;
  }
`;

const NOSE: number[][] = [
  [2219,574.4],[2169,571],[2108,567.3],[2039.4,562],[1994.8,558],[1945.6,554.3],[1927.8,553.3],[1883,551.3],[1851.9,549],[1829.6,543],[1807.3,534],[1779.6,521],[1744.8,504.7],[1713.5,489.3],[1664.4,470],[1614.4,452.7],[1570.6,436],[1540,425.3],[1496.3,412.7],[1450.3,401.7],[1398,392.3],[1349,386.7],[1313,384.3],[1285,383.3],[1255.2,384.3],[1224,387.3],[1188.2,393.3],[1148,402.3],[1121.3,410.3],[1083.3,424.5],[1045.4,441],[1005.2,462.3],[956.5,490.7],[907,520],[878,538.5],[868.4,543.7],[855.6,547.7],[840,550],[791.6,554.3],[738.8,559],[718.5,562],[679.8,566],[627,572.3],[583,578],[545.3,584],[517,588.7],[488.7,593.3],[462.2,597.7],[432,602.7],[403.7,606.7],[366,611],[337.7,614],[316.4,618],[298.5,623],[262,633.3],[226.7,644.7],[200.8,654.7],[172.5,666.7],[153.6,675.7],[145,681.7],[141.3,687.3],[144.2,692.3],[152.7,697.3],[177.2,708],[210.2,721.7],[248,735],[278.7,744.3],[299.9,749.3],[318.8,753],[324.4,756.3],[327.3,763.3],[331,777.3],[340,798.7],[347,815],[351.8,824],[359.4,832.7],[371.6,840.7],[380,849],[386.7,858.3],[390.5,870.7],[394.3,882],[400.9,896.7],[409.4,906],[420.2,911.7],[439,917.3],[462.2,922.3],[498,928.7],[540.6,935.3],[578.3,940],[627,945.3],[686.9,948.7],[743.5,951.7],[804.9,954],[860,954.5],[881,954.2],[904,952.3],[918.6,949.3],[929.3,945.3],[934.3,941],[937,935],[939.3,926],[942.9,920.3],[948.2,917],[956.4,915],[972,911.7],[997,909.7],[1025.7,909.2],[1056,909.7],[1090,912],[1121.4,915],[1154.3,917.7],[1175.7,920],[1200.7,921],[1225.7,919.7],[1254.3,917],[1285.4,913],[1318.6,908.3],[1361.8,904],[1380,903.3],[1401.4,903.7],[1415.7,906],[1426.4,909.3],[1432.5,912],[1443.2,918],[1456.8,930],[1465.7,938.7],[1476.4,944.7],[1487,947.3],[1515.7,947.3],[1544.3,945.7],[1580,944.7],[1737,944.5],[1772.9,945.3],[1822.9,945.3],[1844.3,944.7],[1880,942.7],[1915.7,940],[1940,938.3],[2219,914.5],
];

const FOIL: number[][] = [
  [1861.5,944.7],[1779.3,925.3],[1701.4,908.3],[1614.3,892],[1507.5,874.7],[1450.4,867],[1401.4,861],[1361.8,856.7],[1336.4,853.8],[1285.4,849.3],[1225.7,845.7],[1186.4,843.9],[1150.7,843.5],[1104.3,844.7],[1061.4,848],[1018.6,854],[982.9,862],[956.4,869.7],[925.7,881],[900.7,894],[888.2,903.3],[875.7,915],[868.6,923.3],[863.6,932],[862,939],[864.3,949.3],[868.6,956.7],[875.7,962.3],[886.4,968.3],[902.5,974],[929.3,979.3],[968.6,983],[1025.7,986],[1061.4,987.3],[1104.3,988.4],[1247,988.4],[1286.4,987],[1361.8,984],[1380,983.3],[1469.3,978],[1505,975.7],[1614.3,967.3],[1779.3,955],[1861.5,948.3],
];

/** Catmull-Rom spline through the given points. */
function spline(p: number[][]): string {
  let d = `M${p[0][0]} ${p[0][1]}`;
  for (let i = 0; i < p.length - 1; i++) {
    const a = p[i - 1] || p[i];
    const b = p[i];
    const c = p[i + 1];
    const e = p[i + 2] || c;
    const len = Math.hypot(c[0] - b[0], c[1] - b[1]);
    const la = Math.max(Math.hypot(c[0] - a[0], c[1] - a[1]), 0.01);
    const lb = Math.max(Math.hypot(e[0] - b[0], e[1] - b[1]), 0.01);
    const k = len / 3;
    d += `C${(b[0] + ((c[0] - a[0]) / la) * k).toFixed(1)} ${(b[1] + ((c[1] - a[1]) / la) * k).toFixed(1)} ${(c[0] - ((e[0] - b[0]) / lb) * k).toFixed(1)} ${(c[1] - ((e[1] - b[1]) / lb) * k).toFixed(1)} ${c[0]} ${c[1]}`;
  }
  return d;
}

const GRID_X = [133, 298, 462, 791, 956, 1121, 1285, 1450, 1614, 1779, 1944, 2108];
const GRID_Y = [261, 425, 591, 756, 920, 1085];

function Drawing() {
  return (
    <svg width="2104" height="1009" viewBox="114 115 2104 1009" fill="none" shapeRendering="crispEdges">
      <g stroke="#9098a0">
        {GRID_X.map((x) => <path key={x} d={`M${x + 0.5} 115V1124`} />)}
        {GRID_Y.map((y) => <path key={y} d={`M114 ${y + 0.5}H2218`} />)}
      </g>
      <path d="M627.5 115V1124" stroke="#80858d" />
      <g stroke="#000">
        <path d={spline(NOSE)} />
        <path d="M714 562H723M2032 562H2047" strokeWidth="2" />
        <path d="M861.5 927.5H940.5V956.5H861.5ZM1187.5 882V921.5H1217.5V882M1477.5 870V948.5H1507.5V909" />
      </g>
      <g stroke="#ffff00">
        <path d={spline(FOIL) + "Z"} />
        <path d="M862.5 926.5H901.5V956.5H862.5ZM1187.5 842.5H1217.5V882.5H1187.5ZM1096.5 915.5H1103.5V989.5H1096.5ZM1478.5 870.5H1507.5V909.5H1478.5Z" />
        <path d="M1422.5 924.5L1472.5 978.5L1467.5 983.5L1417.5 928.5Z" />
      </g>
      <path d="M1401.5 857V876M1411.5 857V876M1421.5 857V876" stroke="#35e04a" />
      <path d="M1401 856.5H1422M1401 866.5H1422M1401 876.5H1422" stroke="#ff1f1f" />
      <path d="M869 916.5H1356" stroke="#ff1f1f" strokeDasharray="1 3" />
      <rect x="858" y="912" width="8" height="8" stroke="#ff1f1f" strokeWidth="2" />
      <path d="M1371 916H1434" stroke="#ff1f1f" strokeWidth="2" />
      <polygon points="1432,911 1451,916.5 1432,921" fill="#ff1f1f" />
      <path d="M1362 907V844" stroke="#1fff1f" strokeWidth="2" />
      <polygon points="1357,846 1362,827 1367,846" fill="#1fff1f" />
      <path d="M1361.5 924V984" stroke="#1fff1f" strokeDasharray="1 3" />
      <rect x="1358" y="985" width="8" height="8" stroke="#1fff1f" strokeWidth="2" />
      <path d="M1282 915A80 80 0 0 0 1362 996" stroke="#1f1fff" strokeWidth="2" />
      <circle cx="1332" cy="946" r="5" stroke="#fff" />
      <path d="M1353.5 924.5L1335 943" stroke="#fff" strokeDasharray="1.4 4.2" />
      <circle cx="1362" cy="916" r="5" fill="#fff" stroke="#000" strokeWidth="2" shapeRendering="auto" />
    </svg>
  );
}

export default function App() {
  return (
    <Page>
      <GlobalStyle />
      <TopEdge />
      <TabBar>
        {TABS.map(([label, width, scale], i) => (
          <Tab key={i} label={label} width={width} scale={scale} active={i === 0} />
        ))}
      </TabBar>
      <Toolbar>
        {TOP_TOOLS.map((t, i) => (
          <ToolButton key={t.name} $h={52} $menu={!!t.menu}>
            <svg
              viewBox={`${(3 + 56 * i - t.strip.left) * t.strip.sx} 150 ${56 * t.strip.sx} 156`}
              preserveAspectRatio="none"
            >
              {t.art}
            </svg>
          </ToolButton>
        ))}
      </Toolbar>
      <Body>
        <Sidebar>
          <SideGrip />
          <SideGrid>
            {SIDE_ROWS.map((row, r) =>
              row.tools.map((t, c) => (
                <ToolButton key={`${r}-${c}`} $h={56} $menu={!!t.menu}>
                  <svg viewBox={`${c ? 141 : -27} ${row.y} 168 168`}>{t.art}</svg>
                </ToolButton>
              ))
            )}
          </SideGrid>
        </Sidebar>
        <Viewport>
          <Drawing />
          <ViewLabel>
            <ViewName>Top</ViewName>
            <ViewMenu />
          </ViewLabel>
        </Viewport>
      </Body>
      <Gradients />
    </Page>
  );
}
